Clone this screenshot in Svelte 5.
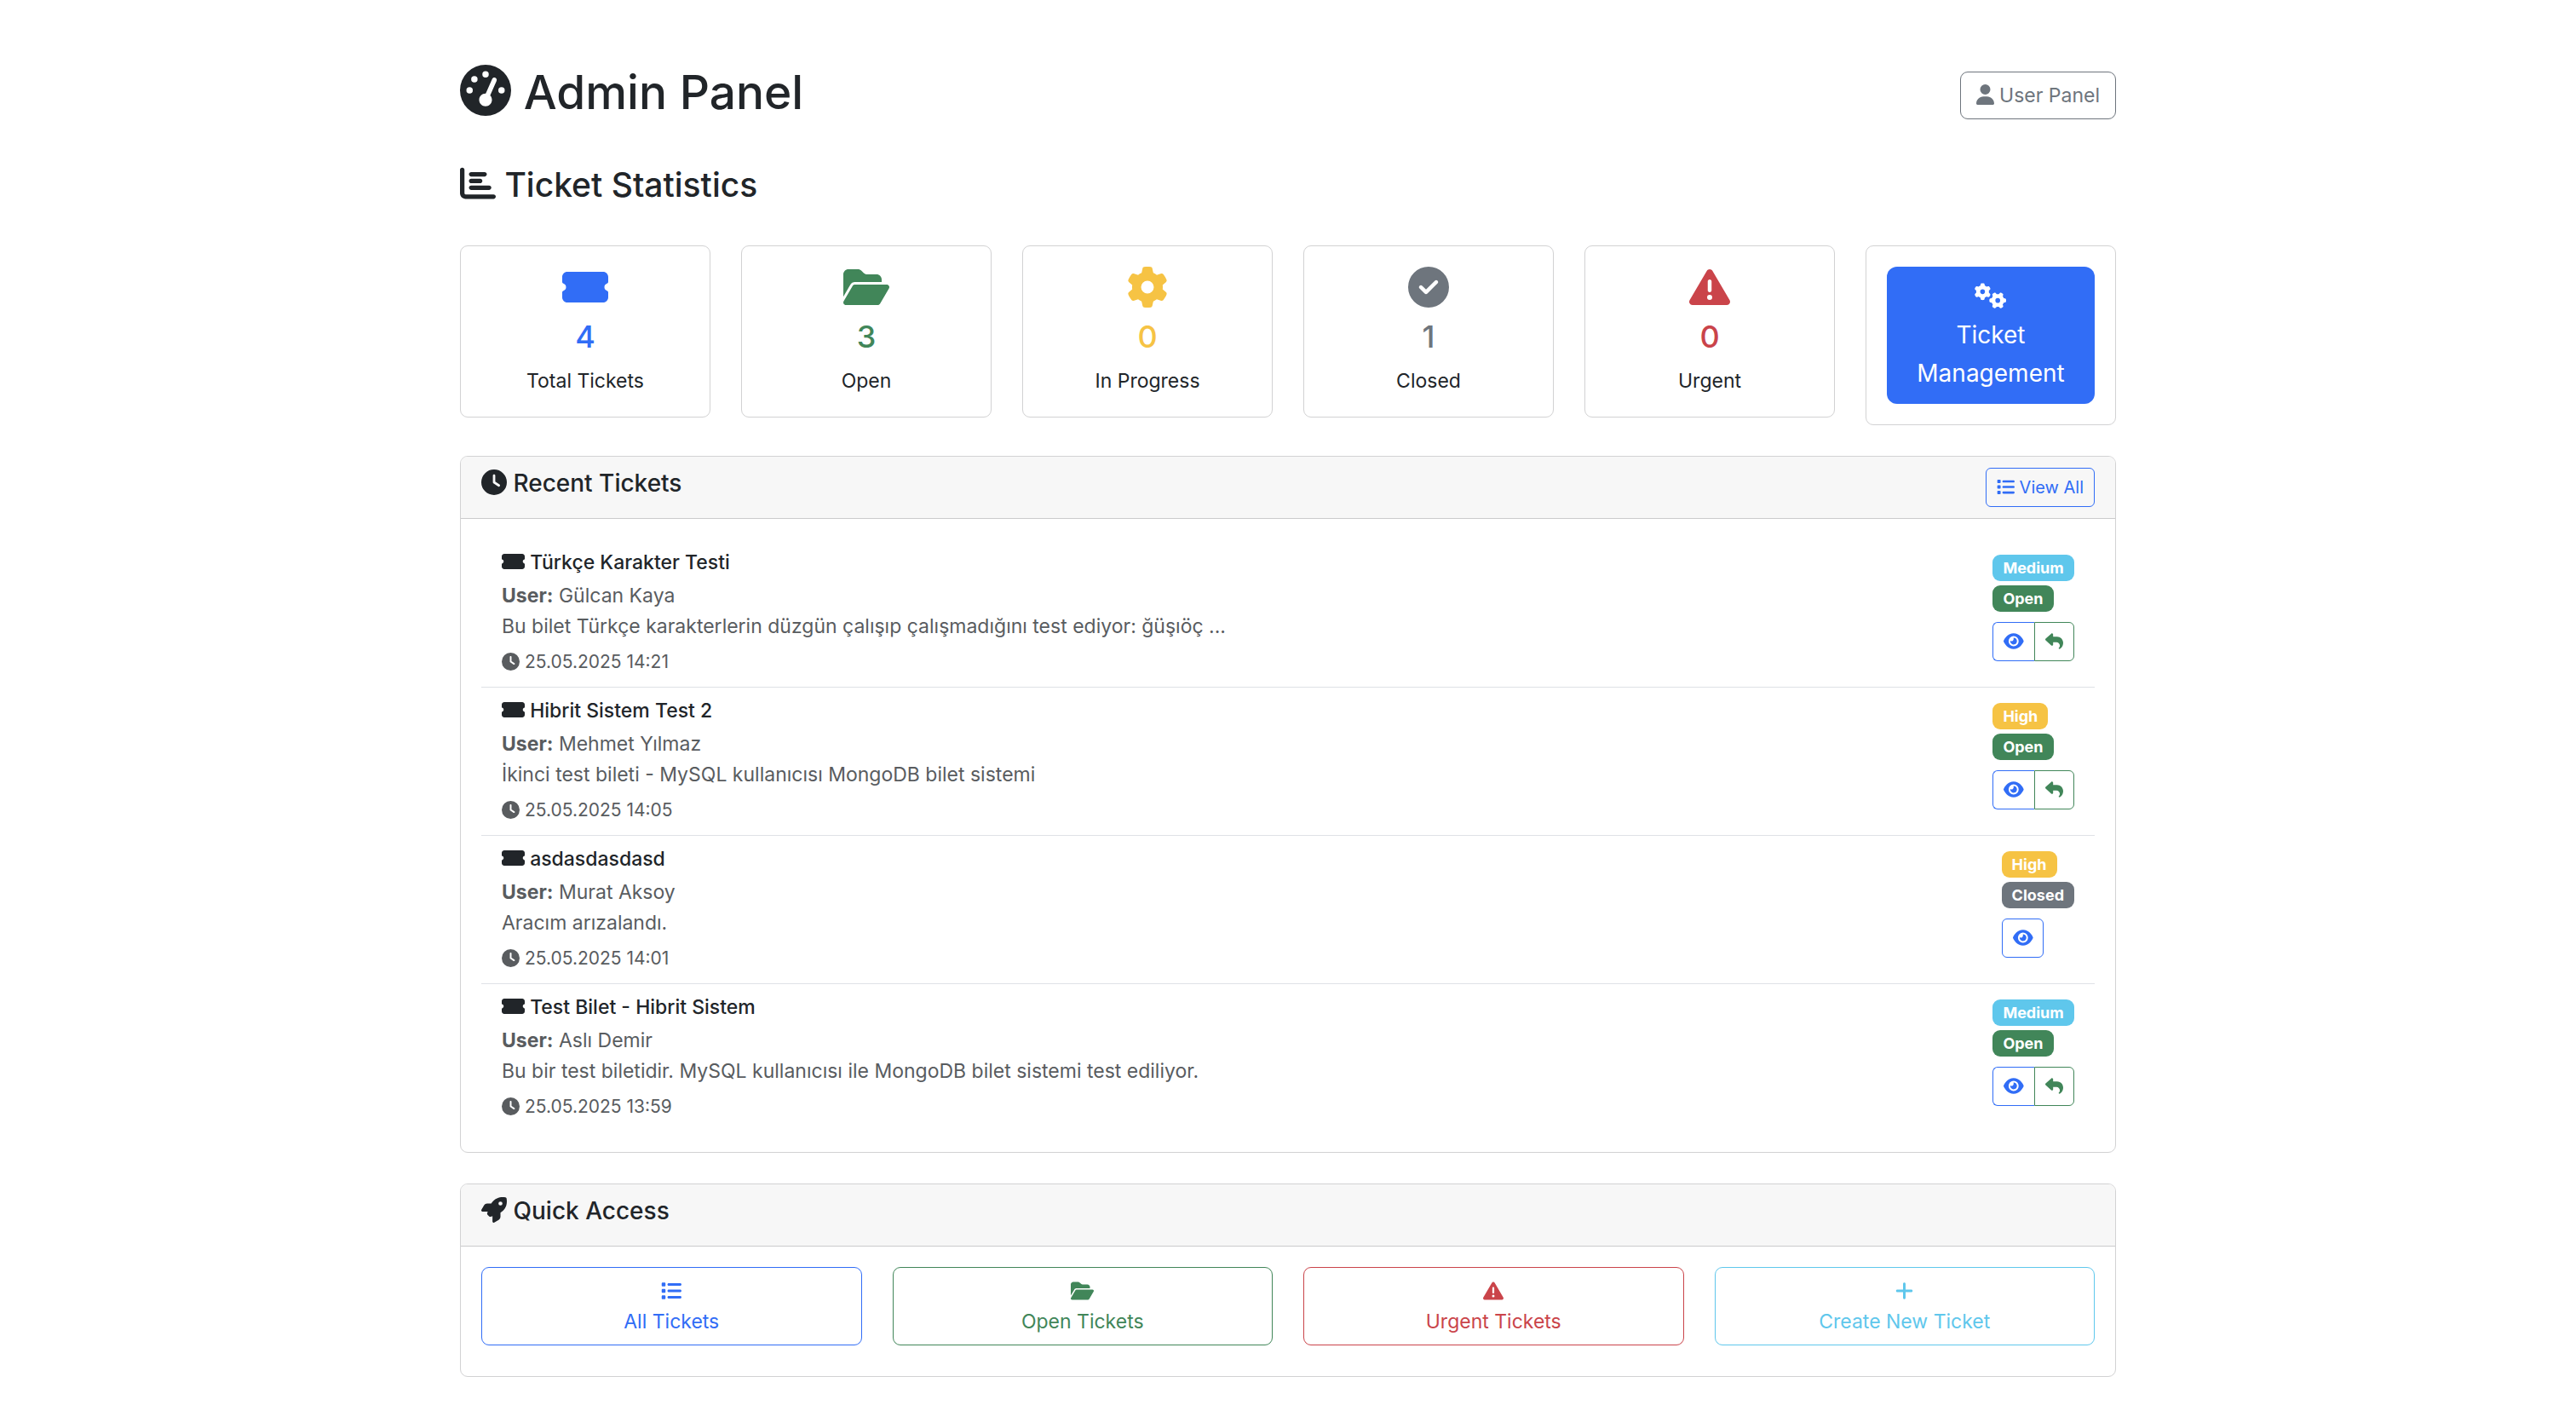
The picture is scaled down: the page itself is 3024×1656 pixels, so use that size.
<script>
  const icons = {
    gauge: { w: 512, d: 'M0 256a256 256 0 1 1 512 0A256 256 0 1 1 0 256zM288 96a32 32 0 1 0 -64 0 32 32 0 1 0 64 0zM256 416c35.3 0 64-28.7 64-64c0-17.4-6.9-33.1-18.1-44.6L366 161.7c5.3-12.1-.2-26.3-12.3-31.6s-26.3 .2-31.6 12.3L257.9 288c-.6 0-1.3 0-1.9 0c-35.3 0-64 28.7-64 64s28.7 64 64 64zM176 144a32 32 0 1 0 -64 0 32 32 0 1 0 64 0zM96 288a32 32 0 1 0 0-64 32 32 0 1 0 0 64zm352-32a32 32 0 1 0 -64 0 32 32 0 1 0 64 0z' },
    chart: { w: 512, d: 'M32 32c17.7 0 32 14.3 32 32V400c0 8.8 7.2 16 16 16H480c17.7 0 32 14.3 32 32s-14.3 32-32 32H80c-44.2 0-80-35.8-80-80V64C0 46.3 14.3 32 32 32zm96 96c0-17.7 14.3-32 32-32l192 0c17.7 0 32 14.3 32 32s-14.3 32-32 32l-192 0c-17.7 0-32-14.3-32-32zm32 64H288c17.7 0 32 14.3 32 32s-14.3 32-32 32H160c-17.7 0-32-14.3-32-32s14.3-32 32-32zm0 96H416c17.7 0 32 14.3 32 32s-14.3 32-32 32H160c-17.7 0-32-14.3-32-32s14.3-32 32-32z' },
    ticket: { w: 576, d: 'M0 128C0 92.7 28.7 64 64 64H512c35.3 0 64 28.7 64 64v64c0 8.8-7.4 15.7-15.7 18.6C541.5 217.1 528 235 528 256s13.5 38.9 32.3 45.4c8.3 2.9 15.7 9.8 15.7 18.6v64c0 35.3-28.7 64-64 64H64c-35.3 0-64-28.7-64-64V320c0-8.8 7.4-15.7 15.7-18.6C34.5 294.9 48 277 48 256s-13.5-38.9-32.3-45.4C7.4 207.7 0 200.8 0 192V128z' },
    folder: { w: 576, d: 'M88.7 223.8L0 375.8V96C0 60.7 28.7 32 64 32H181.5c17 0 33.3 6.7 45.3 18.7l26.5 26.5c12 12 28.3 18.7 45.3 18.7H416c35.3 0 64 28.7 64 64v32H144c-22.8 0-43.8 12.1-55.3 31.8zm27.6 16.1C122.1 230 132.6 224 144 224H544c11.5 0 22 6.1 27.7 16.1s5.7 22.2-.1 32.1l-112 192C453.9 474 443.4 480 432 480H32c-11.5 0-22-6.1-27.7-16.1s-5.7-22.2 .1-32.1l112-192z' },
    gear: { w: 512, d: 'M495.9 166.6c3.2 8.7 .5 18.4-6.4 24.6l-43.3 39.4c1.1 8.3 1.7 16.8 1.7 25.4s-.6 17.1-1.7 25.4l43.3 39.4c6.9 6.2 9.6 15.9 6.4 24.6c-4.4 11.9-9.7 23.3-15.8 34.3l-4.7 8.1c-6.6 11-14 21.4-22.1 31.2c-5.9 7.2-15.7 9.6-24.5 6.8l-55.7-17.7c-13.4 10.3-28.2 18.9-44 25.4l-12.5 57.1c-2 9.1-9 16.3-18.2 17.8c-13.8 2.3-28 3.5-42.5 3.5s-28.7-1.2-42.5-3.5c-9.2-1.5-16.2-8.7-18.2-17.8l-12.5-57.1c-15.8-6.5-30.6-15.1-44-25.4L83.1 425.9c-8.8 2.8-18.6 .3-24.5-6.8c-8.1-9.8-15.5-20.2-22.1-31.2l-4.7-8.1c-6.1-11-11.4-22.4-15.8-34.3c-3.2-8.7-.5-18.4 6.4-24.6l43.3-39.4C64.6 273.1 64 264.6 64 256s.6-17.1 1.7-25.4L22.4 191.2c-6.9-6.2-9.6-15.9-6.4-24.6c4.4-11.9 9.7-23.3 15.8-34.3l4.7-8.1c6.6-11 14-21.4 22.1-31.2c5.9-7.2 15.7-9.6 24.5-6.8l55.7 17.7c13.4-10.3 28.2-18.9 44-25.4l12.5-57.1c2-9.1 9-16.3 18.2-17.8C227.3 1.2 241.5 0 256 0s28.7 1.2 42.5 3.5c9.2 1.5 16.2 8.7 18.2 17.8l12.5 57.1c15.8 6.5 30.6 15.1 44 25.4l55.7-17.7c8.8-2.8 18.6-.3 24.5 6.8c8.1 9.8 15.5 20.2 22.1 31.2l4.7 8.1c6.1 11 11.4 22.4 15.8 34.3zM256 336a80 80 0 1 0 0-160 80 80 0 1 0 0 160z' },
    check: { w: 512, d: 'M256 512A256 256 0 1 0 256 0a256 256 0 1 0 0 512zM369 209L241 337c-9.4 9.4-24.6 9.4-33.9 0l-64-64c-9.4-9.4-9.4-24.6 0-33.9s24.6-9.4 33.9 0l47 47L335 175c9.4-9.4 24.6-9.4 33.9 0s9.4 24.6 0 33.9z' },
    warning: { w: 512, d: 'M256 32c14.2 0 27.3 7.5 34.5 19.8l216 368c7.3 12.4 7.3 27.7 .2 40.1S486.3 480 472 480H40c-14.3 0-27.6-7.7-34.7-20.1s-7-27.8 .2-40.1l216-368C228.7 39.5 241.8 32 256 32zm0 128c-13.3 0-24 10.7-24 24V296c0 13.3 10.7 24 24 24s24-10.7 24-24V184c0-13.3-10.7-24-24-24zm32 224a32 32 0 1 0 -64 0 32 32 0 1 0 64 0z' },
    gears: { w: 640, d: 'M308.5 135.3c7.1-6.3 9.9-16.2 6.2-25c-2.3-5.3-4.8-10.5-7.6-15.5L304 89.4c-3-5-6.3-9.9-9.8-14.6c-5.7-7.6-15.7-10.1-24.7-7.1l-28.2 9.3c-10.7-8.8-23-16-36.2-20.9L199 27.1c-1.9-9.3-9.1-16.7-18.5-17.8C173.9 8.4 167.2 8 160.4 8h-.7c-6.8 0-13.5 .4-20.1 1.2c-9.4 1.1-16.6 8.6-18.5 17.8L115 56.1c-13.3 5-25.5 12.1-36.2 20.9L50.5 67.8c-9-3-19-.5-24.7 7.1c-3.5 4.7-6.8 9.6-9.9 14.6l-3 5.3c-2.8 5-5.3 10.2-7.6 15.6c-3.7 8.7-.9 18.6 6.2 25l22.2 19.8C32.6 161.9 32 168.9 32 176s.6 14.1 1.7 20.9L11.5 216.7c-7.1 6.3-9.9 16.2-6.2 25c2.3 5.3 4.8 10.5 7.6 15.6l3 5.2c3 5.1 6.3 9.9 9.9 14.6c5.7 7.6 15.7 10.1 24.7 7.1l28.2-9.3c10.7 8.8 23 16 36.2 20.9l6.1 29.1c1.9 9.3 9.1 16.7 18.5 17.8c6.7 .8 13.5 1.2 20.4 1.2s13.7-.4 20.4-1.2c9.4-1.1 16.6-8.6 18.5-17.8l6.1-29.1c13.3-5 25.5-12.1 36.2-20.9l28.2 9.3c9 3 19 .5 24.7-7.1c3.5-4.7 6.8-9.5 9.8-14.6l3.1-5.4c2.8-5 5.3-10.2 7.6-15.5c3.7-8.7 .9-18.6-6.2-25l-22.2-19.8c1.1-6.8 1.7-13.8 1.7-20.9s-.6-14.1-1.7-20.9l22.2-19.8zM112 176a48 48 0 1 1 96 0 48 48 0 1 1 -96 0zM504.7 500.5c6.3 7.1 16.2 9.9 25 6.2c5.3-2.3 10.5-4.8 15.5-7.6l5.4-3.1c5-3 9.9-6.3 14.6-9.8c7.6-5.7 10.1-15.7 7.1-24.7l-9.3-28.2c8.8-10.7 16-23 20.9-36.2l29.1-6.1c9.3-1.9 16.7-9.1 17.8-18.5c.8-6.7 1.2-13.5 1.2-20.4s-.4-13.7-1.2-20.4c-1.1-9.4-8.6-16.6-17.8-18.5L583.9 307c-5-13.3-12.1-25.5-20.9-36.2l9.3-28.2c3-9 .5-19-7.1-24.7c-4.7-3.5-9.6-6.8-14.6-9.9l-5.3-3c-5-2.8-10.2-5.3-15.6-7.6c-8.7-3.7-18.6-.9-25 6.2l-19.8 22.2c-6.8-1.1-13.8-1.7-20.9-1.7s-14.1 .6-20.9 1.7l-19.8-22.2c-6.3-7.1-16.2-9.9-25-6.2c-5.3 2.3-10.5 4.8-15.6 7.6l-5.2 3c-5.1 3-9.9 6.3-14.6 9.9c-7.6 5.7-10.1 15.7-7.1 24.7l9.3 28.2c-8.8 10.7-16 23-20.9 36.2L315.1 313c-9.3 1.9-16.7 9.1-17.8 18.5c-.8 6.7-1.2 13.5-1.2 20.4s.4 13.7 1.2 20.4c1.1 9.4 8.6 16.6 17.8 18.5l29.1 6.1c5 13.3 12.1 25.5 20.9 36.2l-9.3 28.2c-3 9-.5 19 7.1 24.7c4.7 3.5 9.5 6.8 14.6 9.8l5.4 3.1c5 2.8 10.2 5.3 15.5 7.6c8.7 3.7 18.6 .9 25-6.2l19.8-22.2c6.8 1.1 13.8 1.7 20.9 1.7s14.1-.6 20.9-1.7l19.8 22.2zM464 304a48 48 0 1 1 0 96 48 48 0 1 1 0-96z' },
    clock: { w: 512, d: 'M256 0a256 256 0 1 1 0 512A256 256 0 1 1 256 0zM232 120V256c0 8 4 15.5 10.7 20l96 64c11 7.4 25.9 4.4 33.3-6.7s4.4-25.9-6.7-33.3L280 243.2V120c0-13.3-10.7-24-24-24s-24 10.7-24 24z' },
    user: { w: 448, d: 'M224 256A128 128 0 1 0 224 0a128 128 0 1 0 0 256zm-45.7 48C79.8 304 0 383.8 0 482.3C0 498.7 13.3 512 29.7 512H418.3c16.4 0 29.7-13.3 29.7-29.7C448 383.8 368.2 304 269.7 304H178.3z' },
    list: { w: 512, d: 'M40 48C26.7 48 16 58.7 16 72v48c0 13.3 10.7 24 24 24H88c13.3 0 24-10.7 24-24V72c0-13.3-10.7-24-24-24H40zM192 64c-17.7 0-32 14.3-32 32s14.3 32 32 32H480c17.7 0 32-14.3 32-32s-14.3-32-32-32H192zm0 160c-17.7 0-32 14.3-32 32s14.3 32 32 32H480c17.7 0 32-14.3 32-32s-14.3-32-32-32H192zm0 160c-17.7 0-32 14.3-32 32s14.3 32 32 32H480c17.7 0 32-14.3 32-32s-14.3-32-32-32H192zM16 232v48c0 13.3 10.7 24 24 24H88c13.3 0 24-10.7 24-24V232c0-13.3-10.7-24-24-24H40c-13.3 0-24 10.7-24 24zM40 368c-13.3 0-24 10.7-24 24v48c0 13.3 10.7 24 24 24H88c13.3 0 24-10.7 24-24V392c0-13.3-10.7-24-24-24H40z' },
    eye: { w: 576, d: 'M288 32c-80.8 0-145.5 36.8-192.6 80.6C48.6 156 17.3 208 2.5 243.7c-3.3 7.9-3.3 16.7 0 24.6C17.3 304 48.6 356 95.4 399.4C142.5 443.2 207.2 480 288 480s145.5-36.8 192.6-80.6c46.8-43.5 78.1-95.4 93-131.1c3.3-7.9 3.3-16.7 0-24.6c-14.9-35.7-46.2-87.7-93-131.1C433.5 68.8 368.8 32 288 32zM144 256a144 144 0 1 1 288 0 144 144 0 1 1 -288 0zm144-64c0 35.3-28.7 64-64 64c-7.1 0-13.9-1.2-20.3-3.3c-5.5-1.8-11.9 1.6-11.7 7.4c.3 6.9 1.3 13.8 3.2 20.7c13.7 51.2 66.4 81.6 117.6 67.9s81.6-66.4 67.9-117.6c-11.1-41.5-47.8-69.4-88.6-71.1c-5.8-.2-9.2 6.1-7.4 11.7c2.1 6.4 3.3 13.2 3.3 20.3z' },
    reply: { w: 512, d: 'M205 34.8c11.5 5.1 19 16.6 19 29.2v64H336c97.2 0 176 78.8 176 176c0 113.3-81.5 163.9-100.2 174.1c-2.5 1.4-5.3 1.9-8.1 1.9c-10.9 0-19.7-8.9-19.7-19.7c0-7.5 4.3-14.4 9.8-19.5c9.4-8.8 22.2-26.4 22.2-56.7c0-53-43-96-96-96H224v64c0 12.6-7.4 24.1-19 29.2s-25 3-34.4-5.4l-160-144C3.9 225.7 0 217.1 0 208s3.9-17.7 10.6-23.8l160-144c9.4-8.5 22.9-10.6 34.4-5.4z' },
    rocket: { w: 512, d: 'M156.6 384.9L125.7 354c-8.5-8.5-11.5-20.8-7.7-32.2c3-8.9 7-20.5 11.8-33.8L24 288c-8.6 0-16.6-4.6-20.9-12.1s-4.2-16.7 .2-24.1l52.5-88.5c13-21.9 36.5-35.3 61.9-35.3l82.3 0c2.4-4 4.8-7.7 7.2-11.3C289.1-4.1 411.1-8.1 483.9 5.3c11.6 2.1 20.6 11.2 22.8 22.8c13.4 72.9 9.3 194.8-111.4 276.7c-3.5 2.4-7.3 4.8-11.3 7.2v82.3c0 25.4-13.4 49-35.3 61.9l-88.5 52.5c-7.4 4.4-16.6 4.5-24.1 .2s-12.1-12.2-12.1-20.9V380.8c-14.1 4.9-26.4 8.9-35.7 11.9c-11.2 3.6-23.4 .5-31.8-7.8zM384 168a40 40 0 1 0 0-80 40 40 0 1 0 0 80z' },
    plus: { w: 448, d: 'M256 80c0-17.7-14.3-32-32-32s-32 14.3-32 32V224H48c-17.7 0-32 14.3-32 32s14.3 32 32 32H192V432c0 17.7 14.3 32 32 32s32-14.3 32-32V288H400c17.7 0 32-14.3 32-32s-14.3-32-32-32H256V80z' }
  };

  const stats = [
    { icon: 'ticket', value: 4, label: 'Total Tickets', tone: 'primary' },
    { icon: 'folder', value: 3, label: 'Open', tone: 'success' },
    { icon: 'gear', value: 0, label: 'In Progress', tone: 'warning' },
    { icon: 'check', value: 1, label: 'Closed', tone: 'secondary' },
    { icon: 'warning', value: 0, label: 'Urgent', tone: 'danger' }
  ];

  const priorityTone = { Medium: 'info', High: 'warning' };
  const statusTone = { Open: 'success', Closed: 'secondary' };

  const tickets = [
    { title: 'Türkçe Karakter Testi', user: 'Gülcan Kaya', text: 'Bu bilet Türkçe karakterlerin düzgün çalışıp çalışmadığını test ediyor: ğüşıöç ...', date: '25.05.2025 14:21', priority: 'Medium', status: 'Open' },
    { title: 'Hibrit Sistem Test 2', user: 'Mehmet Yılmaz', text: 'İkinci test bileti - MySQL kullanıcısı MongoDB bilet sistemi', date: '25.05.2025 14:05', priority: 'High', status: 'Open' },
    { title: 'asdasdasdasd', user: 'Murat Aksoy', text: 'Aracım arızalandı.', date: '25.05.2025 14:01', priority: 'High', status: 'Closed' },
    { title: 'Test Bilet - Hibrit Sistem', user: 'Aslı Demir', text: 'Bu bir test biletidir. MySQL kullanıcısı ile MongoDB bilet sistemi test ediliyor.', date: '25.05.2025 13:59', priority: 'Medium', status: 'Open' }
  ];

  const shortcuts = [
    { icon: 'list', label: 'All Tickets', tone: 'primary' },
    { icon: 'folder', label: 'Open Tickets', tone: 'success' },
    { icon: 'warning', label: 'Urgent Tickets', tone: 'danger' },
    { icon: 'plus', label: 'Create New Ticket', tone: 'info' }
  ];
</script>

{#snippet icon(name)}<svg class="icon" viewBox="0 0 {icons[name].w} 512" aria-hidden="true"><path fill-rule="evenodd" d={icons[name].d} /></svg>{/snippet}

<main class="container">
  <header class="page-head">
    <h1>{@render icon('gauge')} Admin Panel</h1>
    <a class="btn secondary" href="#user">{@render icon('user')} User Panel</a>
  </header>

  <section>
    <h2>{@render icon('chart')} Ticket Statistics</h2>
    <div class="stats">
      {#each stats as s}
        <div class="card stat {s.tone}">
          <div class="stat-icon">{@render icon(s.icon)}</div>
          <strong>{s.value}</strong>
          <p>{s.label}</p>
        </div>
      {/each}
      <div class="card stat">
        <a class="btn manage" href="#manage">{@render icon('gears')}<span>Ticket Management</span></a>
      </div>
    </div>
  </section>

  <section class="card">
    <div class="card-head">
      <h3>{@render icon('clock')} Recent Tickets</h3>
      <a class="btn small primary" href="#all">{@render icon('list')} View All</a>
    </div>
    <ul class="tickets">
      {#each tickets as t}
        <li>
          <div class="info-col">
            <h4>{@render icon('ticket')} {t.title}</h4>
            <p><b>User:</b> {t.user}</p>
            <p>{t.text}</p>
            <p class="date">{@render icon('clock')} {t.date}</p>
          </div>
          <div class="side">
            <span class="badge {priorityTone[t.priority]}">{t.priority}</span>
            <span class="badge {statusTone[t.status]}">{t.status}</span>
            <div class="actions">
              <a class="btn small primary" href="#view" aria-label="View ticket">{@render icon('eye')}</a>
              {#if t.status === 'Open'}
                <a class="btn small success" href="#reply" aria-label="Reply to ticket">{@render icon('reply')}</a>
              {/if}
            </div>
          </div>
        </li>
      {/each}
    </ul>
  </section>

  <section class="card">
    <div class="card-head">
      <h3>{@render icon('rocket')} Quick Access</h3>
    </div>
    <nav class="shortcuts">
      {#each shortcuts as s}
        <a class="btn stacked {s.tone}" href="#{s.icon}">{@render icon(s.icon)}<span>{s.label}</span></a>
      {/each}
    </nav>
  </section>
</main>

<style>
  :global(body) {
    margin: 0;
    background: #fff;
  }
  .container {
    --icon: 24px;
    box-sizing: border-box;
    max-width: 1980px;
    margin: 0 auto;
    padding: 70px 18px 40px;
    color: #212529;
    font: 400 23px/36px Inter, "Liberation Sans", sans-serif;
  }
  h1, h2, h3, h4, p, ul {
    margin: 0;
    padding: 0;
    font-weight: 500;
  }
  p {
    font-weight: 400;
  }
  .icon {
    font-size: var(--icon);
    height: 1em;
    width: auto;
    fill: currentColor;
    vertical-align: -0.125em;
    overflow: visible;
  }
  .primary { --tone: #316df6; }
  .success { --tone: #418659; }
  .warning { --tone: #f6c344; }
  .secondary { --tone: #6e757d; }
  .danger { --tone: #ca444a; }
  .info { --tone: #5fc7ec; }

  .page-head {
    display: flex;
    justify-content: space-between;
    align-items: center;
    margin-bottom: 36px;
  }
  h1 {
    --icon: 60px;
    font-size: 55px;
    line-height: 76px;
    margin-bottom: 8px;
  }
  h2 {
    --icon: 42px;
    font-size: 39px;
    line-height: 54px;
    margin-bottom: 44px;
  }
  h3 {
    --icon: 30px;
    font-size: 28px;
    line-height: 38px;
    margin-bottom: 10px;
  }
  h4 {
    font-size: 23px;
    line-height: 30px;
    margin-bottom: 6px;
  }
  .btn {
    box-sizing: border-box;
    padding: 9px 18px;
    border: 1px solid var(--tone);
    border-radius: 9px;
    color: var(--tone);
    text-align: center;
    text-decoration: none;
  }
  .small {
    --icon: 21px;
    padding: 6px 12px;
    border-radius: 6px;
    font-size: 20px;
    line-height: 32px;
  }
  .stacked {
    display: flex;
    flex-direction: column;
    align-items: center;
  }
  .stacked .icon {
    margin: 6px 0;
  }
  .manage {
    --icon: 30px;
    display: block;
    padding: 13px 24px;
    border-color: #316df6;
    border-radius: 12px;
    background: #316df6;
    color: #fff;
    font-size: 28px;
    line-height: 45px;
  }
  .manage span {
    display: block;
  }
  .card {
    border: 1px solid #d2d2d3;
    border-radius: 9px;
    margin-bottom: 36px;
    overflow: hidden;
    background: #fff;
  }
  .stats {
    display: grid;
    grid-template-columns: repeat(6, minmax(0, 1fr));
    gap: 36px;
    align-items: start;
    margin-bottom: 36px;
  }
  .stat {
    padding: 24px;
    margin: 0;
    text-align: center;
  }
  .stat-icon {
    --icon: 48px;
    display: flex;
    justify-content: center;
    color: var(--tone);
    margin-bottom: 12px;
  }
  .stat strong {
    display: block;
    color: var(--tone);
    font-size: 36px;
    line-height: 44px;
    font-weight: 500;
    margin-bottom: 12px;
  }
  .card-head {
    display: flex;
    justify-content: space-between;
    align-items: center;
    padding: 12px 24px;
    border-bottom: 1px solid #cbcbcc;
    background: #f7f7f7;
  }
  .tickets {
    list-style: none;
    padding: 24px;
  }
  .tickets li {
    display: flex;
    justify-content: space-between;
    align-items: flex-start;
    padding: 12px 24px 11px;
    border-bottom: 1px solid #dfe2e6;
  }
  .tickets li:last-child {
    border-bottom: 0;
  }
  .info-col p {
    color: #595c5f;
  }
  .info-col .date {
    --icon: 21px;
    margin-top: 6px;
    font-size: 21px;
  }
  .side {
    display: flex;
    flex-direction: column;
    align-items: flex-start;
    gap: 5px;
    padding-top: 6px;
  }
  .badge {
    padding: 6px 12px;
    border-radius: 9px;
    background: var(--tone);
    color: #fff;
    font-size: 18px;
    line-height: 19px;
    font-weight: 700;
  }
  .actions {
    display: flex;
    margin-top: 7px;
  }
  .actions .btn:not(:last-child) {
    border-radius: 6px 0 0 6px;
    border-right: 0;
  }
  .actions .btn:last-child:not(:first-child) {
    border-radius: 0 6px 6px 0;
  }
  .shortcuts {
    display: grid;
    grid-template-columns: repeat(4, minmax(0, 1fr));
    gap: 36px;
    padding: 24px 24px 36px;
  }
</style>
